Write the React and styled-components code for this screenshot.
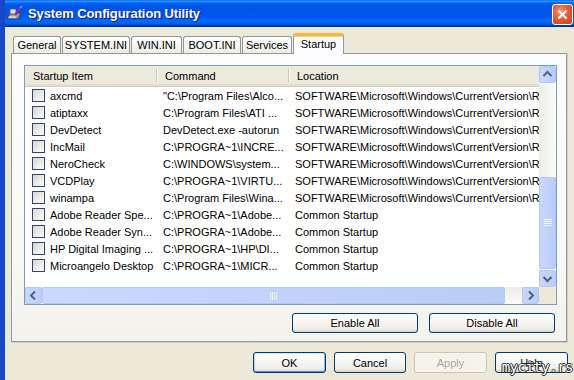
import React from 'react';
import styled, { createGlobalStyle, css } from 'styled-components';

const GlobalStyle = createGlobalStyle`
  html, body { margin: 0; padding: 0; background: #ECE9D8; }
  body { font-family: 'Liberation Sans', Arial, sans-serif; }
`;

const RUN = 'SOFTWARE\\Microsoft\\Windows\\CurrentVersion\\Run';

const items = [
  ['axcmd', '"C:\\Program Files\\Alco...', RUN],
  ['atiptaxx', 'C:\\Program Files\\ATI ...', RUN],
  ['DevDetect', 'DevDetect.exe -autorun', RUN],
  ['IncMail', 'C:\\PROGRA~1\\INCRE...', RUN],
  ['NeroCheck', 'C:\\WINDOWS\\system...', RUN],
  ['VCDPlay', 'C:\\PROGRA~1\\VIRTU...', RUN],
  ['winampa', 'C:\\Program Files\\Wina...', RUN],
  ['Adobe Reader Spe...', 'C:\\PROGRA~1\\Adobe...', 'Common Startup'],
  ['Adobe Reader Syn...', 'C:\\PROGRA~1\\Adobe...', 'Common Startup'],
  ['HP Digital Imaging ...', 'C:\\PROGRA~1\\HP\\DI...', 'Common Startup'],
  ['Microangelo Desktop', 'C:\\PROGRA~1\\MICR...', 'Common Startup'],
];

const tabs = [
  { label: 'General', w: 48 },
  { label: 'SYSTEM.INI', w: 68 },
  { label: 'WIN.INI', w: 51 },
  { label: 'BOOT.INI', w: 58 },
  { label: 'Services', w: 50 },
  { label: 'Startup', w: 51, active: true },
];

const Window = styled.div`
  position: relative;
  width: 574px;
  height: 380px;
  overflow: hidden;
  box-sizing: border-box;
  border-left: 5px solid #1746c9;
  display: flex;
  flex-direction: column;
  background: #ECE9D8;
  font-size: 11px;
  color: #000;
`;

const TitleBar = styled.div`
  height: 27px;
  flex: none;
  display: flex;
  align-items: center;
  padding-left: 1px;
  background: linear-gradient(to bottom, #0058EE 0%, #3593FF 4%, #288EFF 6%, #127DFF 8%,
    #036FFC 10%, #0262EE 14%, #0057E5 20%, #0054E3 24%, #0055EB 56%, #005BF5 66%,
    #026AFE 76%, #0062EF 86%, #0052D6 92%, #0040AB 94%, #003092 100%);
`;

const Title = styled.div`
  margin-left: 5px;
  flex: 1;
  color: #fff;
  font-weight: bold;
  font-size: 13px;
  letter-spacing: -0.1px;
  text-shadow: 1px 1px 0 #0a1b7a;
`;

const CloseButton = styled.div`
  width: 21px;
  height: 21px;
  box-sizing: border-box;
  margin-right: 1px;
  margin-top: 1px;
  border: 1px solid #fff;
  border-radius: 3px;
  background: radial-gradient(circle at 40% 35%, #F39A7E 0%, #E35F3B 45%, #C2401A 100%);
  display: flex;
  align-items: center;
  justify-content: center;
`;

const Body = styled.div`
  position: relative;
  flex: 1;
  padding: 6px 6px 0 6px;
  display: flex;
  flex-direction: column;
`;

const TabRow = styled.div`
  display: flex;
  align-items: flex-end;
  gap: 1px;
  height: 20px;
  margin-left: 2px;
  position: relative;
  z-index: 2;
`;

const Tab = styled.div`
  width: ${p => p.$w}px;
  box-sizing: border-box;
  height: 17px;
  border: 1px solid #919B9C;
  border-bottom: none;
  border-radius: 3px 3px 0 0;
  background: linear-gradient(#FFFFFF, #ECEBE5);
  display: flex;
  align-items: center;
  justify-content: center;
  white-space: nowrap;
  ${p => p.$active && css`
    height: 21px;
    margin-bottom: -1px;
    border-top: 3px solid #F5B83F;
    box-shadow: inset 0 1px 0 #FFD37A;
    background: #FCFCFE;
    padding-bottom: 2px;
  `}
`;

const Panel = styled.div`
  height: 289px;
  box-sizing: border-box;
  margin-right: 1px;
  border: 1px solid #919B9C;
  background: linear-gradient(#FCFCFE 0%, #F8F8F4 70%, #F3F2EC 100%);
  box-shadow: 1px 1px 0 #D0CEBF;
  padding: 11px 9px 8px 12px;
  display: flex;
  flex-direction: column;
`;

const ListView = styled.div`
  width: 533px;
  height: 240px;
  box-sizing: border-box;
  border: 1px solid #7F9DB9;
  background: #fff;
  display: grid;
  grid-template-columns: 1fr 17px;
  grid-template-rows: 1fr 17px;
`;

const ListContent = styled.div`
  overflow: hidden;
`;

const Columns = styled.div`
  display: grid;
  grid-template-columns: 132px 132px 1fr;
`;

const Header = styled(Columns)`
  height: 21px;
  box-sizing: border-box;
  background: #EBEADB;
  border-bottom: 1px solid #D6D2C2;
  box-shadow: inset 0 -2px 0 #E2DECD;
`;

const HeaderCell = styled.div`
  position: relative;
  padding-left: 8px;
  line-height: 20px;
  white-space: nowrap;
  &::after {
    content: '';
    display: ${p => (p.$last ? 'none' : 'block')};
    position: absolute;
    right: 0;
    top: 3px;
    bottom: 4px;
    width: 1px;
    background: #C7C5B2;
    box-shadow: 1px 0 0 #fff;
  }
`;

const Row = styled(Columns)`
  height: 17px;
  align-items: center;
`;

const Cell = styled.div`
  padding-left: ${p => p.$pad}px;
  white-space: nowrap;
  overflow: hidden;
  display: flex;
  align-items: center;
  gap: 5px;
`;

const Check = styled.span`
  width: 13px;
  height: 13px;
  flex: none;
  box-sizing: border-box;
  border: 1px solid #2A4A6E;
  background: linear-gradient(135deg, #D7D6CF 0%, #ECECE7 55%, #FBFBF9 100%);
`;

const VScroll = styled.div`
  display: flex;
  flex-direction: column;
  background: linear-gradient(to right, #EEEDE5, #FBFBF8);
`;

const HScroll = styled.div`
  display: flex;
  background: linear-gradient(#EEEDE5, #FBFBF8);
`;

const Corner = styled.div`
  background: #ECE9D8;
`;

const blueFace = css`
  box-sizing: border-box;
  border: 1px solid #B4C8F6;
  border-radius: 2px;
  background: linear-gradient(to right, #C9D8FC, #B9CDF9);
`;

const ScrollButton = styled.div`
  ${blueFace};
  width: 17px;
  height: 17px;
  flex: none;
  display: flex;
  align-items: center;
  justify-content: center;
`;

const Track = styled.div`
  flex: 1;
  display: flex;
  flex-direction: ${p => (p.$vertical ? 'column' : 'row')};
`;

const Thumb = styled.div`
  ${blueFace};
  flex: none;
  display: flex;
  align-items: center;
  justify-content: center;
  ${p => p.$vertical
    ? css`height: ${p.$size}px; margin-top: ${p.$offset}px;`
    : css`width: ${p.$size}px; margin-left: ${p.$offset}px;`}
`;

const ActionRow = styled.div`
  display: flex;
  justify-content: flex-end;
  gap: 11px;
  margin-top: 8px;
  padding-right: 2px;
`;

const DialogRow = styled.div`
  display: flex;
  justify-content: flex-end;
  gap: 8px;
  margin-top: 10px;
`;

const Button = styled.div`
  width: ${p => p.$w}px;
  height: ${p => p.$h}px;
  box-sizing: border-box;
  border: 1px solid #003C74;
  border-radius: 3px;
  background: linear-gradient(#FFFFFF 0%, #F7F6F2 50%, #ECEBE4 85%, #D8D3C8 100%);
  display: flex;
  align-items: center;
  justify-content: center;
  ${p => p.$default && css`
    box-shadow: inset 0 1px 0 #CEE7FF, inset 0 -1px 0 #6982EE, inset 1px 0 0 #B9D1FA, inset -1px 0 0 #8DAAF2;
  `}
  ${p => p.$disabled && css`
    border-color: #C9C7BA;
    background: #F5F4EA;
    color: #ACA899;
  `}
`;

const Watermark = styled.div`
  position: absolute;
  right: 1px;
  bottom: 5px;
  font-family: 'DejaVu Sans Mono', monospace;
  font-size: 14px;
  letter-spacing: -0.5px;
  color: #fff;
  text-shadow: 1px 0 0 #2a2a2a, -1px 0 0 #2a2a2a, 0 1px 0 #2a2a2a, 0 -1px 0 #2a2a2a;
`;

const Arrow = ({ dir }) => {
  const paths = {
    up: 'M4.5 10 L8.5 6 L12.5 10',
    down: 'M4.5 7 L8.5 11 L12.5 7',
    left: 'M10 4.5 L6 8.5 L10 12.5',
    right: 'M7 4.5 L11 8.5 L7 12.5',
  };
  return (
    <svg width="15" height="15" viewBox="1 1 15 15">
      <path d={paths[dir]} fill="none" stroke="#4D6185" strokeWidth="2" />
    </svg>
  );
};

const Grip = ({ vertical }) => (
  <svg width="8" height="8" viewBox="0 0 8 8">
    {[1, 3, 5, 7].map(i =>
      vertical
        ? <line key={i} x1="0" y1={i - 0.5} x2="8" y2={i - 0.5} stroke="#EEF4FE" />
        : <line key={i} x1={i - 0.5} y1="0" x2={i - 0.5} y2="8" stroke="#EEF4FE" />
    )}
  </svg>
);

const AppIcon = () => (
  <svg width="17" height="17" viewBox="0 0 17 17">
    <path d="M2 11 L6 8 L15 8 L12 14 L1 14 Z" fill="#9A9A9A" stroke="#3a3a3a" strokeWidth="0.8" />
    <path d="M3 12 L10 12" stroke="#ffffff" strokeWidth="1" />
    <rect x="4" y="4" width="6" height="5" fill="#dcdcdc" stroke="#555" strokeWidth="0.8" />
    <path d="M9 10 L15 2" stroke="#8B2BB0" strokeWidth="2" />
    <path d="M14 3 L16 1" stroke="#E070E0" strokeWidth="1.2" />
  </svg>
);

export default function App() {
  return (
    <>
      <GlobalStyle />
      <Window>
        <TitleBar>
          <AppIcon />
          <Title>System Configuration Utility</Title>
          <CloseButton>
            <svg width="13" height="13" viewBox="0 0 13 13">
              <path d="M2.5 2.5 L10.5 10.5 M10.5 2.5 L2.5 10.5" stroke="#fff" strokeWidth="2" />
            </svg>
          </CloseButton>
        </TitleBar>
        <Body>
          <TabRow>
            {tabs.map(t => (
              <Tab key={t.label} $w={t.w} $active={t.active}>{t.label}</Tab>
            ))}
          </TabRow>
          <Panel>
            <ListView>
              <ListContent>
                <Header>
                  <HeaderCell>Startup Item</HeaderCell>
                  <HeaderCell>Command</HeaderCell>
                  <HeaderCell $last>Location</HeaderCell>
                </Header>
                {items.map(([name, cmd, loc]) => (
                  <Row key={name}>
                    <Cell $pad={7}><Check />{name}</Cell>
                    <Cell $pad={6}>{cmd}</Cell>
                    <Cell $pad={6}>{loc}</Cell>
                  </Row>
                ))}
              </ListContent>
              <VScroll>
                <ScrollButton><Arrow dir="up" /></ScrollButton>
                <Track $vertical>
                  <Thumb $vertical $size={92} $offset={94}><Grip vertical /></Thumb>
                </Track>
                <ScrollButton><Arrow dir="down" /></ScrollButton>
              </VScroll>
              <HScroll>
                <ScrollButton><Arrow dir="left" /></ScrollButton>
                <Track>
                  <Thumb $size={463} $offset={0}><Grip /></Thumb>
                </Track>
                <ScrollButton><Arrow dir="right" /></ScrollButton>
              </HScroll>
              <Corner />
            </ListView>
            <ActionRow>
              <Button $w={126} $h={20}>Enable All</Button>
              <Button $w={126} $h={20}>Disable All</Button>
            </ActionRow>
          </Panel>
          <DialogRow>
            <Button $w={73} $h={21} $default>OK</Button>
            <Button $w={72} $h={21}>Cancel</Button>
            <Button $w={73} $h={21} $disabled>Apply</Button>
            <Button $w={73} $h={21}>Help</Button>
          </DialogRow>
          <Watermark>mycity.rs</Watermark>
        </Body>
      </Window>
    </>
  );
}
